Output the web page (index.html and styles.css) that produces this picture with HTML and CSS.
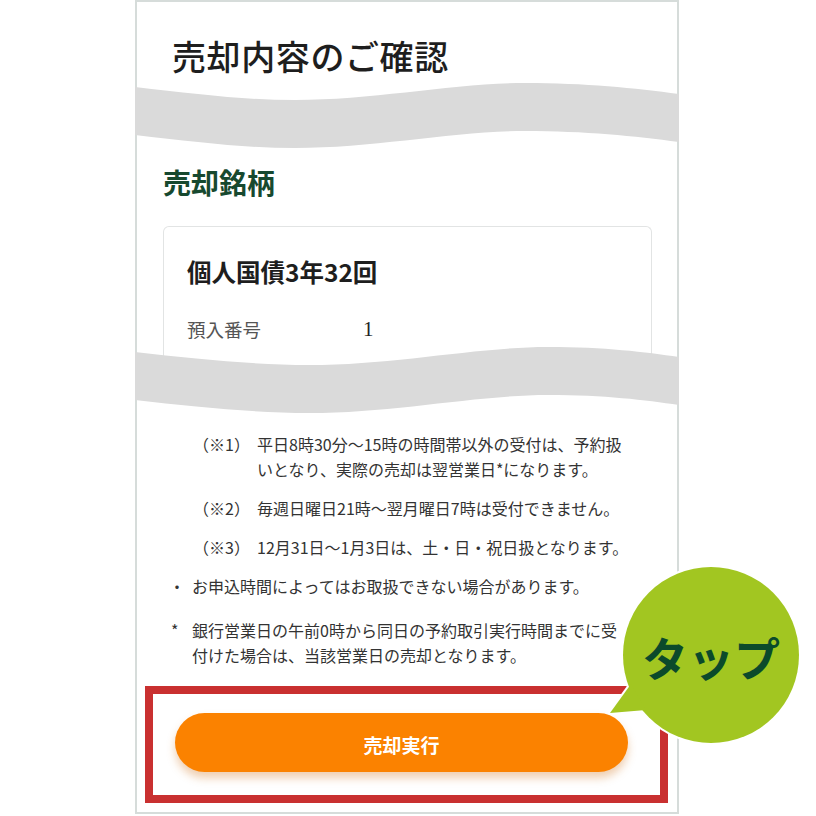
FILE: index.html
```html
<!DOCTYPE html>
<html lang="ja">
<head>
<meta charset="utf-8">
<title>売却内容のご確認</title>
<link rel="stylesheet" href="styles.css">
</head>
<body>
<div class="frame">
  <div class="head"><h1 class="title">売却内容のご確認</h1></div>
  <svg class="wave" viewBox="0 0 544 70" preserveAspectRatio="none" aria-hidden="true">
    <path d="M0,5 C60,12 110,18 160,18 C240,18 320,1 390,1 C450,1 500,6 544,12 L544,60 C500,54 450,49 390,49 C320,49 240,66 160,66 C110,66 60,60 0,53 Z" fill="#dadada"/>
  </svg>
  <h2 class="sec-title">売却銘柄</h2>
  <div class="card">
    <div class="card-title">個人国債3年32回</div>
    <div class="card-row"><span class="card-label">預入番号</span><span class="card-value">1</span></div>
  </div>
  <svg class="wave wave2" viewBox="0 0 544 70" preserveAspectRatio="none" aria-hidden="true">
    <path d="M0,7 C60,14 120,20 174,20 C260,20 340,2 413,2 C470,2 510,7 544,12 L544,60 C510,55 470,50 413,50 C340,50 260,68 174,68 C120,68 60,62 0,55 Z" fill="#dadada"/>
  </svg>
  <div class="notes">
    <div class="note ref"><span class="lbl">（※1）</span><span class="txt">平日8時30分〜15時の時間帯以外の受付は、予約扱<br>いとなり、実際の売却は翌営業日*になります。</span></div>
    <div class="note ref"><span class="lbl">（※2）</span><span class="txt">毎週日曜日21時〜翌月曜日7時は受付できません。</span></div>
    <div class="note ref"><span class="lbl">（※3）</span><span class="txt">12月31日〜1月3日は、土・日・祝日扱となります。</span></div>
    <div class="note dot"><span class="lbl">・</span><span class="txt">お申込時間によってはお取扱できない場合があります。</span></div>
    <div class="note star"><span class="lbl">*</span><span class="txt">銀行営業日の午前0時から同日の予約取引実行時間までに受<br>付けた場合は、当該営業日の売却となります。</span></div>
  </div>
  <div class="highlight">
    <button class="exec-btn" type="button">売却実行</button>
  </div>
</div>
<div class="bubble">
  <svg class="bubble-shape" viewBox="0 0 216 200" aria-hidden="true">
    <g stroke="#ffffff" stroke-width="4" stroke-linejoin="round" fill="#ffffff">
      <circle cx="111" cy="95" r="88"/>
      <path d="M31,124 L10,153 L46,150 Z"/>
    </g>
    <g fill="#a2c621">
      <circle cx="111" cy="95" r="88"/>
      <path d="M31,124 L10,153 L46,150 Z"/>
    </g>
  </svg>
  <span class="bubble-text">タップ</span>
</div>
</body>
</html>
```

FILE: styles.css
```css
* { box-sizing: border-box; }
html, body { margin: 0; padding: 0; background: #ffffff; }
body {
  position: relative;
  width: 816px;
  height: 816px;
  overflow: hidden;
  font-family: "Noto Sans CJK JP", "Noto Sans", sans-serif;
  color: #222;
}
.frame {
  margin-left: 135px;
  width: 544px;
  border: 2px solid #d6dcda;
  padding-bottom: 9px;
  display: flex;
  flex-direction: column;
}
.head {
  height: 80px;
  padding: 34px 0 0 35px;
}
.title {
  margin: 0;
  font-size: 34px;
  line-height: 40px;
  font-weight: 500;
  color: #1e1e1e;
  letter-spacing: 0.6px;
}
.wave {
  display: block;
  width: 544px;
  height: 70px;
  margin: 0 -2px;
  position: relative;
  z-index: 1;
}
.wave2 { margin-top: -31px; }
.sec-title {
  margin: 12px 0 26px 26px;
  font-size: 28px;
  line-height: 36px;
  font-weight: 700;
  color: #17492f;
}
.card {
  margin: 0 25px 0 26px;
  height: 150px;
  border: 1px solid #e2e4e4;
  border-bottom: none;
  border-radius: 6px 6px 0 0;
  padding: 28px 0 0 23px;
}
.card-title {
  font-size: 24.5px;
  line-height: 34px;
  font-weight: 700;
  color: #1e1e1e;
}
.card-row {
  margin-top: 26px;
  display: flex;
  align-items: center;
  height: 28px;
}
.card-label {
  width: 176px;
  font-size: 18.5px;
  color: #555;
}
.card-value {
  font-family: "Liberation Serif", serif;
  font-size: 21px;
  color: #222;
}
.notes {
  padding-top: 17px;
  display: flex;
  flex-direction: column;
  gap: 14px;
}
.note {
  display: flex;
  font-size: 16px;
  line-height: 25px;
  color: #333;
}
.note .txt { white-space: nowrap; }
.note.ref { padding-left: 56px; }
.note.ref .lbl { width: 64px; flex: none; }
.note.dot { padding-left: 32px; }
.note.dot .lbl { width: 23px; flex: none; }
.note.star { padding-left: 34px; margin-top: 5px; }
.note.star .lbl { width: 21px; flex: none; }
.highlight {
  margin: 18px 9px 0 8px;
  border: 8px solid #c93030;
  padding: 19px 32px 23px 22px;
}
.exec-btn {
  display: block;
  width: 100%;
  height: 59px;
  border: none;
  border-radius: 30px;
  background: #fb8200;
  color: #ffffff;
  font-family: "Noto Sans CJK JP", "Noto Sans", sans-serif;
  font-size: 19px;
  font-weight: 700;
  padding-top: 4px;
  box-shadow: 0 6px 9px rgba(214, 128, 50, 0.38);
}
.bubble {
  position: absolute;
  left: 600px;
  top: 560px;
  width: 216px;
  height: 200px;
}
.bubble-shape {
  display: block;
  width: 216px;
  height: 200px;
}
.bubble-text {
  position: absolute;
  left: 23px;
  top: 7px;
  width: 176px;
  height: 176px;
  display: flex;
  align-items: center;
  justify-content: center;
  font-size: 46px;
  font-weight: 700;
  color: #0b4a2b;
  padding-top: 2px;
}
```
